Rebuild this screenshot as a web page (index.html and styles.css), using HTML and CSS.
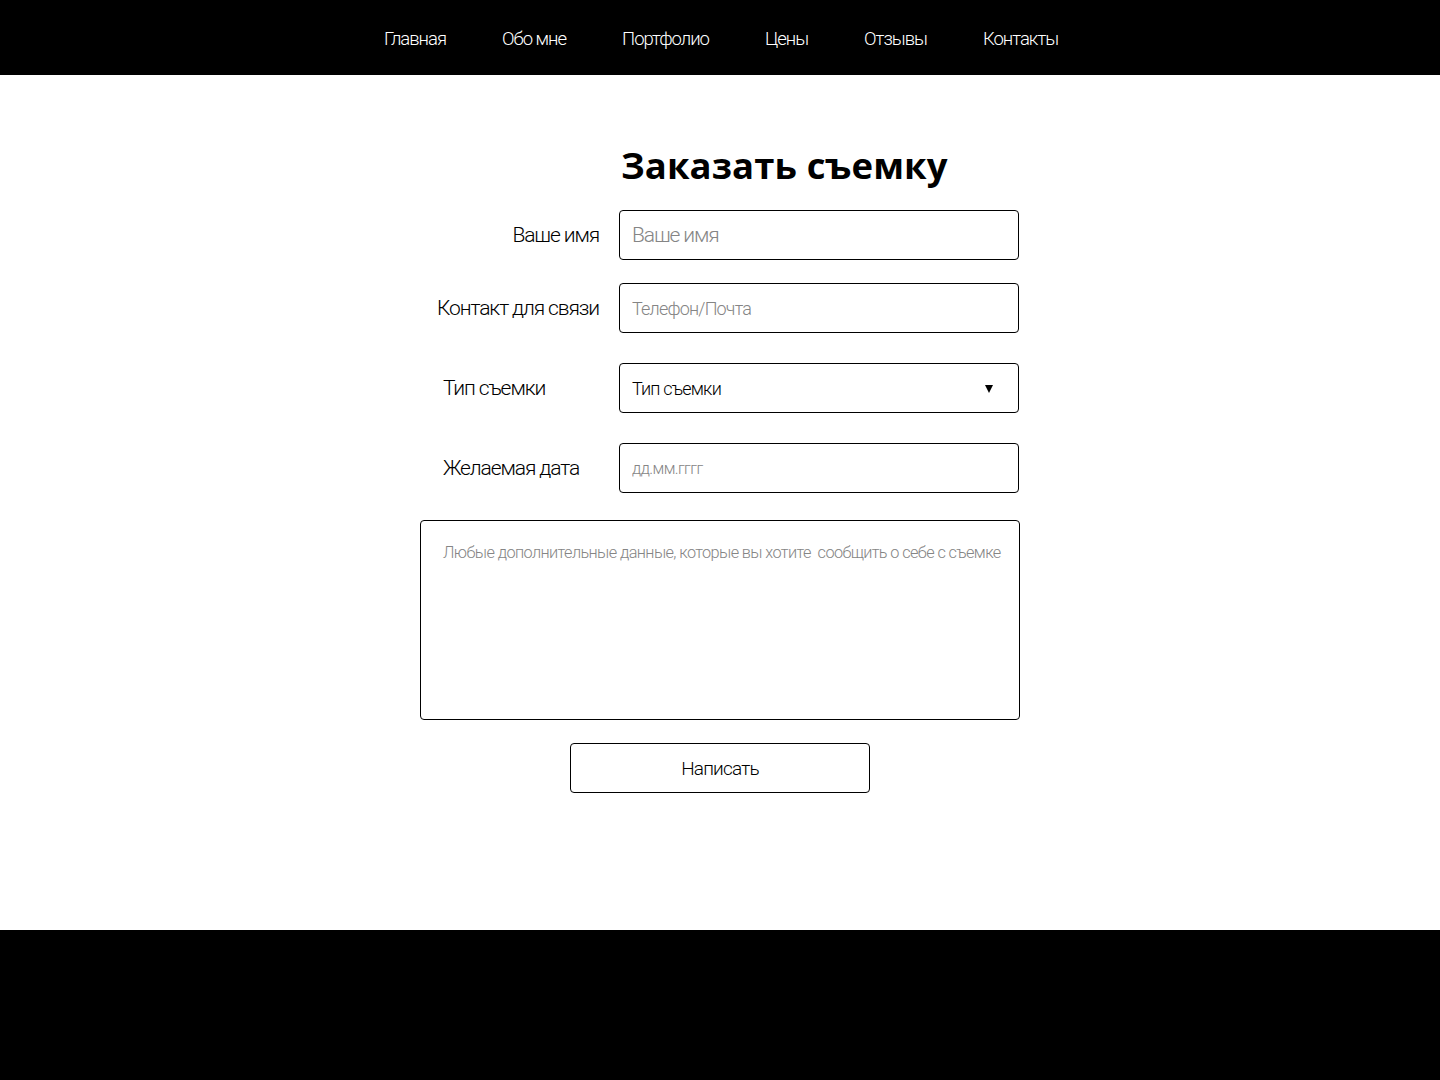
FILE: index.html
```html
<!DOCTYPE html>
<html lang="ru">
<head>
<meta charset="utf-8">
<title>Заказать съемку</title>
<link rel="stylesheet" href="styles.css">
</head>
<body>
<header class="top">
  <nav class="nav">
    <a href="#">Главная</a>
    <a href="#">Обо мне</a>
    <a href="#">Портфолио</a>
    <a href="#">Цены</a>
    <a href="#">Отзывы</a>
    <a href="#">Контакты</a>
  </nav>
</header>
<main class="main">
  <form class="order">
    <h1 class="title">Заказать съемку</h1>
    <div class="row row-first">
      <label class="label label-right">Ваше имя</label>
      <input class="field field-big" type="text" placeholder="Ваше имя">
    </div>
    <div class="row">
      <label class="label label-right">Контакт для связи</label>
      <input class="field" type="text" placeholder="Телефон/Почта">
    </div>
    <div class="row">
      <label class="label">Тип съемки</label>
      <div class="select">
        <span>Тип съемки</span>
        <span class="arrow"></span>
      </div>
    </div>
    <div class="row">
      <label class="label">Желаемая дата</label>
      <input class="field field-small" type="text" placeholder="дд.мм.гггг">
    </div>
    <textarea class="notes" placeholder="Любые дополнительные данные, которые вы хотите  сообщить о себе с съемке"></textarea>
    <button class="send" type="button">Написать</button>
  </form>
</main>
<footer class="bottom"></footer>
</body>
</html>
```
FILE: styles.css
```css
* { box-sizing: border-box; }
html, body { margin: 0; padding: 0; background: #fff; }
body {
  font-family: Roboto, "Liberation Sans", sans-serif;
  font-weight: 300;
  color: #000;
  width: 1440px;
}
.top {
  background: #000;
  height: 75px;
  display: flex;
  align-items: center;
  justify-content: center;
}
.nav {
  display: flex;
  gap: 56px;
  padding-left: 2px;
  padding-top: 2px;
}
.nav a {
  color: #fff;
  text-decoration: none;
  font-size: 18.5px;
  line-height: 24px;
  letter-spacing: -1px;
}
.main {
  height: 855px;
  padding-top: 65px;
}
.order {
  width: 600px;
  margin: 0 auto;
  display: flex;
  flex-direction: column;
}
.title {
  margin: 0 0 20px 201px;
  font-family: "Open Sans", sans-serif;
  font-weight: 700;
  font-size: 36.5px;
  line-height: 50px;
  height: 50px;
  letter-spacing: 0.1px;
}
.row {
  display: grid;
  grid-template-columns: 156px 400px;
  column-gap: 20px;
  padding-left: 23px;
  align-items: center;
  margin-bottom: 30px;
}
.row-first { margin-bottom: 23px; }
.label {
  font-size: 21px;
  line-height: 28px;
  letter-spacing: -1.1px;
  white-space: nowrap;
}
.label-right { justify-self: end; }
.field, .select {
  width: 400px;
  height: 50px;
  border: 1px solid #000;
  border-radius: 4px;
  padding: 0 12px;
  font-family: inherit;
  font-weight: inherit;
  font-size: 18px;
  letter-spacing: -0.8px;
  color: #000;
  background: #fff;
  outline: none;
}
.field::placeholder { color: #858585; }
.field-big { font-size: 21px; letter-spacing: -1.1px; }
.field-small { font-size: 16px; letter-spacing: -0.6px; }
.select {
  position: relative;
  display: flex;
  align-items: center;
}
.arrow {
  position: absolute;
  right: 25px;
  top: 21px;
  width: 0;
  height: 0;
  border-left: 4px solid transparent;
  border-right: 4px solid transparent;
  border-top: 8px solid #000;
}
.notes {
  width: 600px;
  height: 200px;
  margin-top: -3px;
  border: 1px solid #000;
  border-radius: 4px;
  padding: 22px 6px 19px 22px;
  font-family: inherit;
  font-weight: inherit;
  font-size: 16.3px;
  letter-spacing: -0.6px;
  resize: none;
  outline: none;
}
.notes::placeholder { color: #858585; }
.send {
  align-self: center;
  width: 300px;
  height: 50px;
  margin-top: 23px;
  border: 1px solid #000;
  border-radius: 4px;
  background: #fff;
  font-family: inherit;
  font-weight: inherit;
  font-size: 19px;
  letter-spacing: -0.8px;
  color: #000;
}
.bottom {
  background: #000;
  height: 150px;
}
```
